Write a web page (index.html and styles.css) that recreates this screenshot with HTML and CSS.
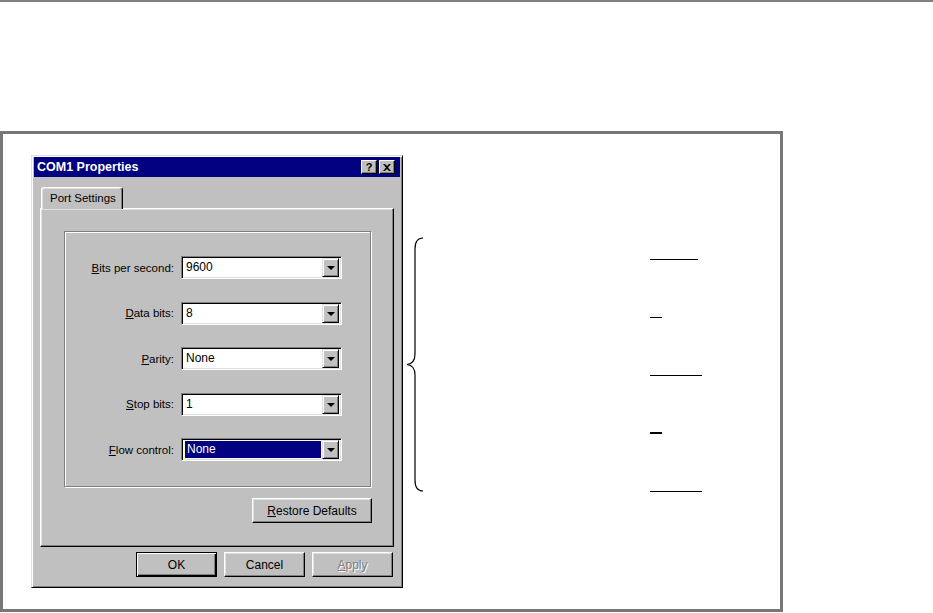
FILE: index.html
```html
<!DOCTYPE html>
<html>
<head>
<meta charset="utf-8">
<link rel="stylesheet" href="styles.css">
</head>
<body>
<div class="topline"></div>
<div class="figure">
  <div class="dialog">
    <div class="titlebar">
      <span class="title">COM1 Properties</span>
      <div class="tbtns">
        <div class="tbtn help">?</div>
        <div class="tbtn close">
          <svg width="8" height="7" viewBox="0 0 8 7"><path d="M0 0h2l2 2 2-2h2L5 3.5 8 7H6L4 5 2 7H0l3-3.5z" fill="#000"/></svg>
        </div>
      </div>
    </div>
    <div class="tabs"><div class="tab">Port Settings</div></div>
    <div class="panel">
      <div class="group">
        <div class="lbl"><u>B</u>its per second:</div>
        <div class="combo"><span class="val">9600</span><span class="drop"><i></i></span></div>
        <div class="lbl"><u>D</u>ata bits:</div>
        <div class="combo"><span class="val">8</span><span class="drop"><i></i></span></div>
        <div class="lbl"><u>P</u>arity:</div>
        <div class="combo"><span class="val">None</span><span class="drop"><i></i></span></div>
        <div class="lbl"><u>S</u>top bits:</div>
        <div class="combo"><span class="val">1</span><span class="drop"><i></i></span></div>
        <div class="lbl"><u>F</u>low control:</div>
        <div class="combo"><span class="val sel">None</span><span class="drop"><i></i></span></div>
      </div>
      <div class="restore-row"><div class="btn restore"><u>R</u>estore Defaults</div></div>
    </div>
    <div class="btnrow">
      <div class="btn default">OK</div>
      <div class="btn">Cancel</div>
      <div class="btn disabled"><u>A</u>pply</div>
    </div>
  </div>
  <svg class="brace" width="18" height="256" viewBox="0 0 18 256">
    <path d="M17,1 C11.5,1 9,4 9,12 L9,117 C9,123 6,127 1,127.5 C6,128 9,132 9,138 L9,243 C9,251 11.5,254 17,254" fill="none" stroke="#000" stroke-width="1.2"/>
  </svg>
  <div class="blanks">
    <div class="blank w48"></div>
    <div class="blank w12"></div>
    <div class="blank w52"></div>
    <div class="blank w12 thick"></div>
    <div class="blank w52"></div>
  </div>
</div>
</body>
</html>
```
FILE: styles.css
```css
html, body {
  margin: 0;
  padding: 0;
  background: #fff;
}
body {
  font-family: "Liberation Sans", Arial, sans-serif;
  font-size: 11.5px;
  color: #000;
  width: 933px;
  height: 613px;
  overflow: hidden;
}
.topline {
  height: 2px;
  background: #808080;
}
.figure {
  margin-top: 129px;
  width: 783px;
  height: 481px;
  box-sizing: border-box;
  border: 3px solid #777;
  display: flex;
  align-items: flex-start;
  padding: 21px 0 0 28px;
}
.dialog {
  width: 372px;
  height: 433px;
  box-sizing: border-box;
  background: #c0c0c0;
  border: 1px solid;
  border-color: #dfdfdf #000 #000 #dfdfdf;
  box-shadow: inset 1px 1px #fff, inset -1px -1px #808080;
  padding: 1px 2px 2px 2px;
  display: flex;
  flex-direction: column;
  flex-shrink: 0;
}
.titlebar {
  height: 20px;
  background: #000080;
  display: flex;
  align-items: center;
  justify-content: space-between;
  padding: 0 5px 0 3px;
}
.title {
  color: #fff;
  font-weight: bold;
  font-size: 12.5px;
}
.tbtns {
  display: flex;
  gap: 2px;
}
.tbtn {
  width: 16px;
  height: 14px;
  box-sizing: border-box;
  background: #c0c0c0;
  border: 1px solid;
  border-color: #fff #000 #000 #fff;
  box-shadow: inset -1px -1px #808080;
  display: flex;
  align-items: center;
  justify-content: center;
  font-weight: bold;
  font-size: 11px;
  line-height: 1;
}
.tabs {
  margin-top: 10px;
  padding-left: 7px;
  display: flex;
}
.tab {
  position: relative;
  z-index: 1;
  width: 82px;
  height: 22px;
  box-sizing: border-box;
  margin-bottom: -1px;
  background: #c0c0c0;
  border: 1px solid;
  border-bottom: none;
  border-color: #fff #000 transparent #fff;
  border-radius: 3px 3px 0 0;
  box-shadow: inset -1px 0 #808080, inset 1px 1px #dfdfdf;
  padding: 4px 0 0 8px;
}
.panel {
  margin-left: 6px;
  width: 354px;
  height: 339px;
  box-sizing: border-box;
  border: 1px solid;
  border-color: #fff #000 #000 #fff;
  box-shadow: inset -1px -1px #808080, inset 1px 1px #dfdfdf;
  padding: 22px 22px 0 23px;
}
.group {
  height: 256px;
  box-sizing: border-box;
  border: 1px solid #808080;
  box-shadow: inset 1px 1px #fff, 1px 1px #fff;
  display: grid;
  grid-template-columns: 109px 161px;
  column-gap: 7px;
  row-gap: 22.5px;
  grid-auto-rows: 23px;
  padding-top: 24px;
  align-content: start;
}
.lbl {
  text-align: right;
  align-self: center;
  white-space: nowrap;
}
.combo {
  box-sizing: border-box;
  height: 23px;
  background: #fff;
  border: 1px solid;
  border-color: #808080 #fff #fff #808080;
  box-shadow: inset 1px 1px #000, inset -1px -1px #dfdfdf;
  display: flex;
  align-items: center;
  padding: 2px 2px 2px 2px;
}
.val {
  flex: 1;
  font-size: 12px;
  padding-left: 2px;
  height: 17px;
  line-height: 17px;
  margin-right: 1px;
}
.val.sel {
  background: #000080;
  color: #fff;
  outline: 1px dotted #ffff80;
  outline-offset: 0;
  margin-left: 1px;
}
.drop {
  width: 17px;
  height: 19px;
  box-sizing: border-box;
  background: #c0c0c0;
  border: 1px solid;
  border-color: #dfdfdf #000 #000 #dfdfdf;
  box-shadow: inset 1px 1px #fff, inset -1px -1px #808080;
  display: flex;
  align-items: center;
  justify-content: center;
}
.drop i {
  width: 0;
  height: 0;
  border-left: 4px solid transparent;
  border-right: 4px solid transparent;
  border-top: 4px solid #000;
  margin-top: 1px;
}
.restore-row {
  display: flex;
  justify-content: flex-end;
  margin-top: 11px;
  margin-right: -1px;
}
.btn {
  width: 81px;
  height: 25px;
  box-sizing: border-box;
  background: #c0c0c0;
  border: 1px solid;
  border-color: #fff #000 #000 #fff;
  box-shadow: inset -1px -1px #808080, inset 1px 1px #dfdfdf;
  display: flex;
  align-items: center;
  justify-content: center;
  font-size: 12px;
}
.btn.restore {
  width: 120px;
}
.btn.default {
  border: 1px solid #000;
  box-shadow: inset 1px 1px #fff, inset -1px -1px #000, inset -2px -2px #808080;
}
.btn.disabled {
  color: #808080;
  text-shadow: 1px 1px #fff;
}
.btnrow {
  display: flex;
  justify-content: flex-end;
  gap: 7px;
  margin-top: 5px;
  padding-right: 7px;
}
.brace {
  margin-left: 3px;
  margin-top: 82px;
  flex-shrink: 0;
}
.blanks {
  margin-left: 226px;
  margin-top: 104px;
  display: flex;
  flex-direction: column;
  gap: 56.75px;
}
.blank {
  height: 1px;
  background: #000;
}
.blank.thick {
  height: 2px;
}
.w48 { width: 48px; }
.w12 { width: 12px; }
.w52 { width: 52px; }
```
